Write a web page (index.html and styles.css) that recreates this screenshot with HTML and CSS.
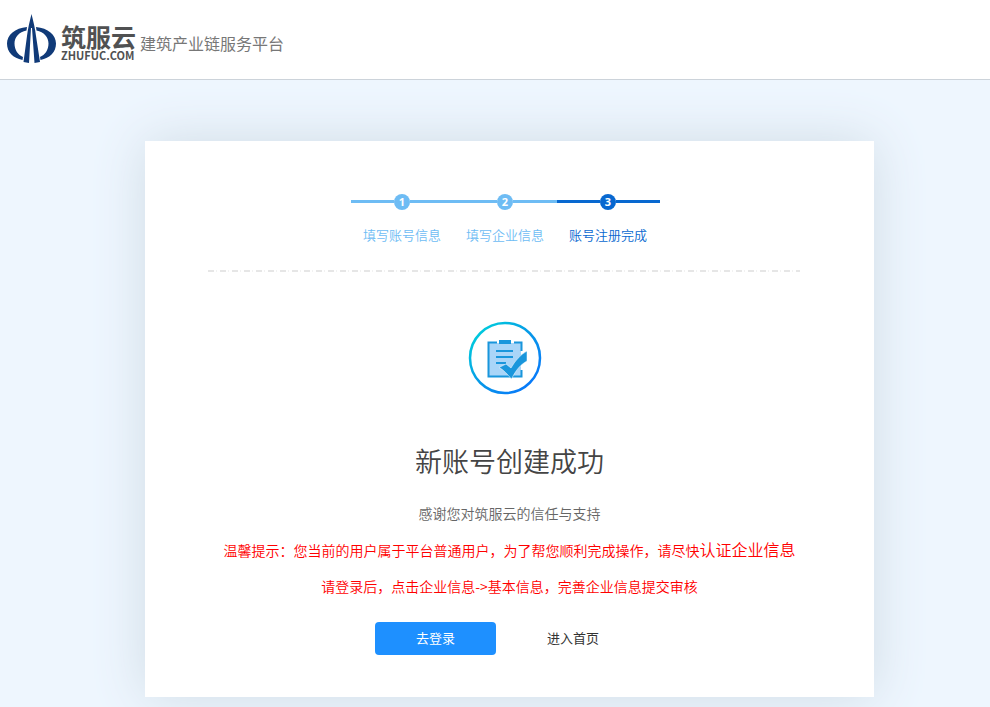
FILE: index.html
```html
<!DOCTYPE html>
<html lang="zh-CN">
<head>
<meta charset="utf-8">
<meta name="viewport" content="width=device-width, initial-scale=1">
<title>筑服云 - 账号注册完成</title>
<link rel="stylesheet" href="styles.css">
</head>
<body>
<header class="header">
  <svg class="logo-mark" viewBox="0 0 50 50" aria-hidden="true">
    <path fill="#103a78" d="M24.500 0C26.500 8 28 14 29 22L33 48L27.500 49L25 14H24L22 49L16.500 48L20 22C21 14 22.500 8 24.500 0Z"/>
    <path fill="#103a78" d="M20 13C8 14 0 21 0 29.500C0 38 6 44 15.500 46L16 43C11 41 7.500 36 7.500 29.500C7.500 23 12 18 19.500 16.500Z"/>
    <path fill="#103a78" d="M29 13C41 14 49 21 49 29.500C49 38 43 44 33.500 46L33 43C38 41 41.500 36 41.500 29.500C41.500 23 37 18 29.500 16.500Z"/>
  </svg>
  <div class="brand">
    <span class="brand-name">筑服云</span>
    <span class="brand-domain">ZHUFUC.COM</span>
  </div>
  <span class="tagline">建筑产业链服务平台</span>
</header>
<main class="main">
  <section class="card">
    <ol class="steps">
      <li class="step"><span class="step-line"><b class="step-number">1</b></span><span class="step-label">填写账号信息</span></li>
      <li class="step"><span class="step-line"><b class="step-number">2</b></span><span class="step-label">填写企业信息</span></li>
      <li class="step step-current"><span class="step-line"><b class="step-number">3</b></span><span class="step-label">账号注册完成</span></li>
    </ol>
    <div class="divider"></div>
    <div class="result">
      <svg class="result-icon" viewBox="0 0 74 74" aria-hidden="true">
        <defs>
          <linearGradient id="ring" x1="0" y1="0" x2="1" y2="1">
            <stop offset="0.100" stop-color="#00cddc"/>
            <stop offset="0.500" stop-color="#0798e8"/>
            <stop offset="0.900" stop-color="#0878fa"/>
          </linearGradient>
        </defs>
        <circle cx="37" cy="37" r="35" fill="#fff" stroke="url(#ring)" stroke-width="2.500"/>
        <path fill="#a9d5f8" d="M21 22H53V55H21Z"/>
        <path fill="none" stroke="#1996dc" stroke-width="2" d="M29 21.500H20.500V55.500H53.500V49M53.500 30V21.500H46"/>
        <path fill="#1996dc" d="M31 19H43V23H31ZM28 29H45V31H28ZM28 35H45V37H28ZM28 41H38V43H28Z"/>
        <path fill="#1996dc" stroke="#fff" stroke-width="0.500" d="M31 46.500L38 43L43 47C47 40 52 34 59 30V40C52 44 48 49 43.500 58C39 53 36 49 31 46.500Z"/>
      </svg>
      <h1 class="title">新账号创建成功</h1>
      <p class="thanks">感谢您对筑服云的信任与支持</p>
      <p class="notice">温馨提示：您当前的用户属于平台普通用户，为了帮您顺利完成操作，请尽快<span class="notice-strong">认证企业信息</span></p>
      <p class="notice">请登录后，点击企业信息-&gt;基本信息，完善企业信息提交审核</p>
    </div>
    <div class="actions">
      <button class="login" type="button">去登录</button>
      <a class="home" href="#">进入首页</a>
    </div>
  </section>
</main>
</body>
</html>
```
FILE: styles.css
```css
* {
  box-sizing: border-box;
}

body {
  margin: 0;
  min-height: 100vh;
  background: #eef6fe;
  color: #444;
  font-family: "Noto Sans CJK SC", sans-serif;
  font-size: 13px;
}

.header {
  display: flex;
  align-items: center;
  height: 80px;
  padding: 0 7px 2px;
  background: #fff;
  border-bottom: 1px solid #ccd3da;
}

.logo-mark {
  width: 50px;
  height: 50px;
}

.brand {
  display: flex;
  flex-direction: column;
  margin-left: 4px;
  padding-top: 6px;
  color: #505152;
}

.brand-name {
  font-size: 25px;
  font-weight: 700;
  line-height: 26px;
}

.brand-domain {
  font-size: 11px;
  font-weight: 700;
  line-height: 12px;
}

.tagline {
  margin-left: 4px;
  padding-top: 8px;
  color: #777;
  font-family: KaiTi, STKaiti, "Noto Sans CJK SC", serif;
  font-size: 16px;
  line-height: 20px;
}

.main {
  padding: 61px 116px 10px 145px;
}

.card {
  padding: 52px 74px 42px 63px;
  background: #fff;
  box-shadow: 0 0 50px #d0dce6;
}

.steps {
  display: grid;
  grid-template-columns: repeat(3, 103px);
  justify-content: center;
  margin: 0;
  padding: 0 0 0 2px;
  list-style: none;
}

.step {
  color: #6ebcf4;
  text-align: center;
}

.step-current {
  color: #0868d0;
}

.step-line {
  display: flex;
  align-items: center;
  height: 17px;
}

.step-line::before,
.step-line::after {
  content: "";
  flex: 1;
  height: 3px;
  background: currentColor;
}

.step-number {
  width: 16px;
  height: 16px;
  border-radius: 50%;
  background: currentColor;
  font-family: "Open Sans", sans-serif;
  font-size: 11px;
  line-height: 16px;
}

.step-number::first-letter {
  color: #fff;
}

.step-label {
  display: block;
  margin-top: 15px;
  font-weight: 350;
  line-height: 20px;
}

.divider {
  height: 2px;
  margin-top: 25px;
  background: repeating-linear-gradient(90deg, #e6e6e6 0 6px, #fff 6px 8px, #f2f2f2 8px 9px, #fff 9px 12px);
}

.result {
  display: flex;
  flex-direction: column;
  align-items: center;
  margin: 0 -11px 0 0;
  text-align: center;
}

.result-icon {
  width: 74px;
  height: 74px;
  margin: 49px 10px 0 0;
}

.title {
  margin: 46px 0 0;
  font-size: 27px;
  font-weight: 350;
  line-height: 40px;
}

.thanks,
.notice {
  margin: 0;
  font-size: 14px;
  font-weight: 350;
  line-height: 20px;
}

.thanks {
  margin-top: 22px;
  color: #666;
}

.notice {
  margin-top: 16px;
  color: #f00;
}

.notice-strong {
  font-size: 16px;
}

.actions {
  display: flex;
  align-items: center;
  justify-content: center;
  gap: 51px;
  margin-top: 26px;
  padding-right: 34px;
}

.login {
  width: 121px;
  height: 33px;
  padding: 0 0 2px;
  border: 0;
  border-radius: 4px;
  background: #1e90ff;
  color: #fff;
  font: inherit;
  cursor: pointer;
}

.home {
  padding-bottom: 2px;
  color: #333;
  text-decoration: none;
}
```
